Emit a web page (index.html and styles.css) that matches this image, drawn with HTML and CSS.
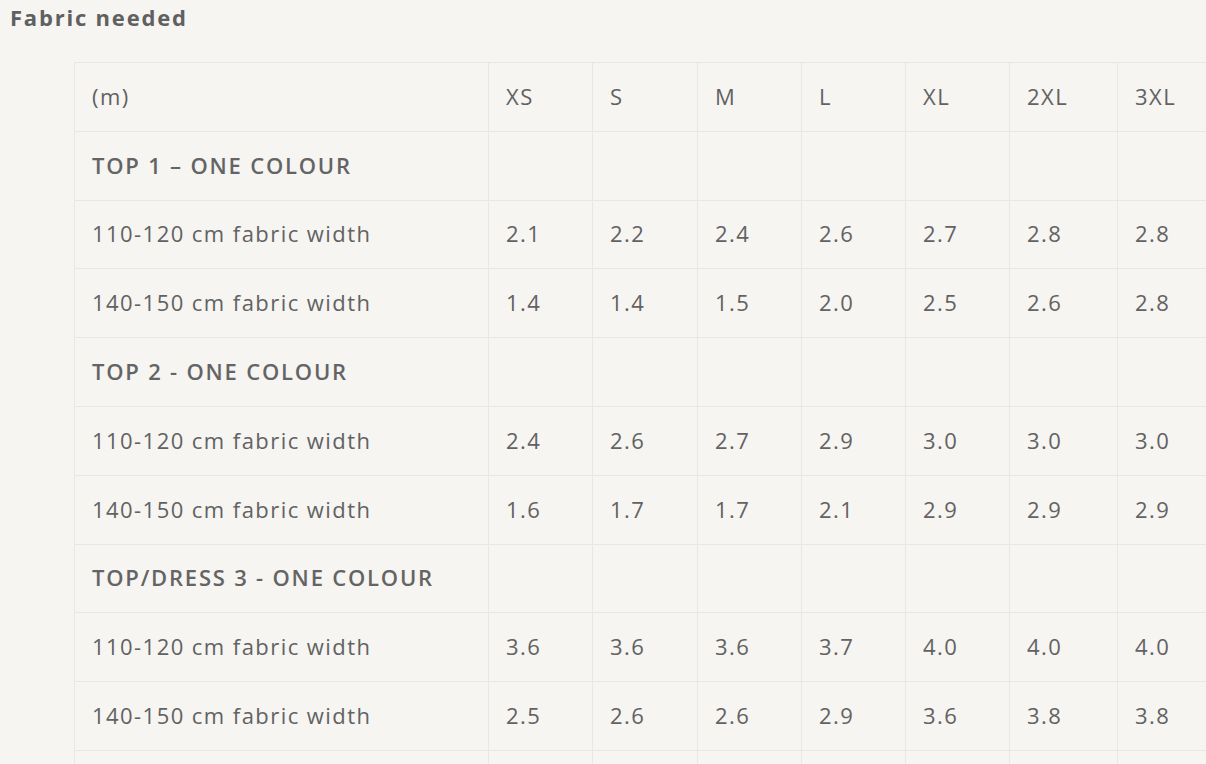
FILE: index.html
```html
<!DOCTYPE html>
<html lang="en">
<head>
<meta charset="utf-8">
<title>Fabric needed</title>
<link rel="stylesheet" href="styles.css">
</head>
<body>
<div class="page">
  <h3 class="title">Fabric needed</h3>
  <div class="table-wrap">
    <table class="fabric">
      <colgroup>
        <col class="c-label">
        <col class="c-a"><col class="c-b"><col class="c-a"><col class="c-a"><col class="c-a">
        <col class="c-wide"><col class="c-last">
      </colgroup>
      <tbody>
        <tr><td>(m)</td><td>XS</td><td>S</td><td>M</td><td>L</td><td>XL</td><td>2XL</td><td>3XL</td></tr>
        <tr class="group"><td>TOP 1 – ONE COLOUR</td><td></td><td></td><td></td><td></td><td></td><td></td><td></td></tr>
        <tr><td>110-120 cm fabric width</td><td>2.1</td><td>2.2</td><td>2.4</td><td>2.6</td><td>2.7</td><td>2.8</td><td>2.8</td></tr>
        <tr><td>140-150 cm fabric width</td><td>1.4</td><td>1.4</td><td>1.5</td><td>2.0</td><td>2.5</td><td>2.6</td><td>2.8</td></tr>
        <tr class="group"><td>TOP 2 - ONE COLOUR</td><td></td><td></td><td></td><td></td><td></td><td></td><td></td></tr>
        <tr><td>110-120 cm fabric width</td><td>2.4</td><td>2.6</td><td>2.7</td><td>2.9</td><td>3.0</td><td>3.0</td><td>3.0</td></tr>
        <tr><td>140-150 cm fabric width</td><td>1.6</td><td>1.7</td><td>1.7</td><td>2.1</td><td>2.9</td><td>2.9</td><td>2.9</td></tr>
        <tr class="group"><td>TOP/DRESS 3 - ONE COLOUR</td><td></td><td></td><td></td><td></td><td></td><td></td><td></td></tr>
        <tr><td>110-120 cm fabric width</td><td>3.6</td><td>3.6</td><td>3.6</td><td>3.7</td><td>4.0</td><td>4.0</td><td>4.0</td></tr>
        <tr><td>140-150 cm fabric width</td><td>2.5</td><td>2.6</td><td>2.6</td><td>2.9</td><td>3.6</td><td>3.8</td><td>3.8</td></tr>
        <tr class="spacer"><td></td><td></td><td></td><td></td><td></td><td></td><td></td><td></td></tr>
      </tbody>
    </table>
  </div>
</div>
</body>
</html>
```
FILE: styles.css
```css
html, body {
  margin: 0;
  padding: 0;
  background: #f6f5f2;
}
body {
  overflow: hidden;
  width: 1206px;
  height: 764px;
  font-family: "Open Sans", "Liberation Sans", sans-serif;
  color: #626262;
}
.page {
  padding: 3px 0 0 10px;
}
.title {
  margin: 0;
  font-size: 22px;
  font-weight: 700;
  letter-spacing: 1.8px;
  line-height: 28px;
  color: #606060;
}
.table-wrap {
  margin: 31px 0 0 64px;
}
.fabric {
  border-collapse: collapse;
  table-layout: fixed;
  width: 1133px;
}
.c-label { width: 414px; }
.c-a { width: 104px; }
.c-b { width: 105px; }
.c-wide { width: 108px; }
.c-last { width: 90px; }
.fabric td {
  border: 1px solid #e9e7e3;
  height: 65.8px;
  padding: 0 0 2px 17px;
  font-size: 22px;
  letter-spacing: 1.45px;
  line-height: 26px;
  vertical-align: middle;
  white-space: nowrap;
}
.fabric .group td {
  font-weight: 600;
  letter-spacing: 1.8px;
  color: #646464;
}
.fabric .spacer td {
  height: 20px;
}
```
